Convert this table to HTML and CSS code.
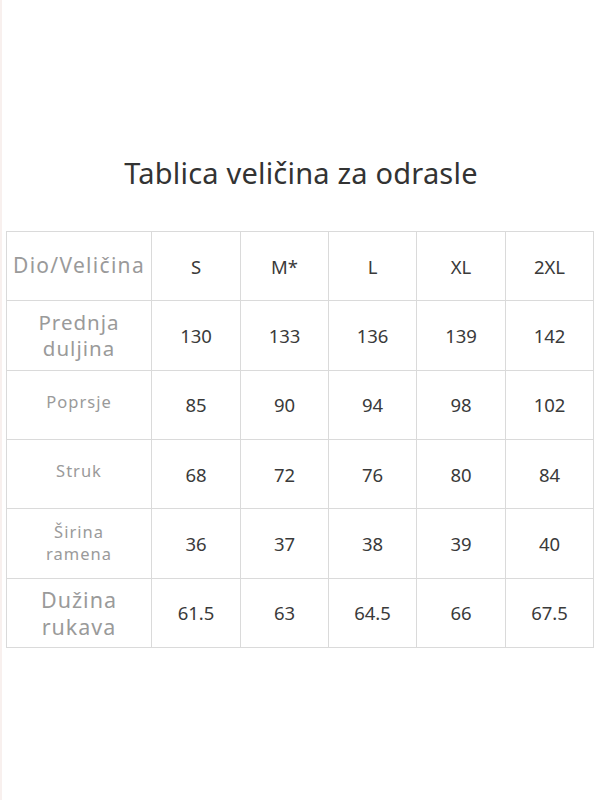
FILE: index.html
```html
<!DOCTYPE html>
<html lang="hr">
<head>
<meta charset="utf-8">
<title>Tablica veličina</title>
<link rel="stylesheet" href="styles.css">
</head>
<body>
<div class="page">
  <h1 class="title">Tablica veličina za odrasle</h1>
  <table class="sizes">
    <colgroup>
      <col class="c-label"><col class="c-s"><col class="c-m"><col class="c-l"><col class="c-xl"><col class="c-2xl">
    </colgroup>
    <tr>
      <th class="label hd">Dio/Veličina</th>
      <th>S</th><th>M*</th><th>L</th><th>XL</th><th>2XL</th>
    </tr>
    <tr>
      <th class="label lg">Prednja<br>duljina</th>
      <td>130</td><td>133</td><td>136</td><td>139</td><td>142</td>
    </tr>
    <tr>
      <th class="label sm up">Poprsje</th>
      <td>85</td><td>90</td><td>94</td><td>98</td><td>102</td>
    </tr>
    <tr>
      <th class="label sm up">Struk</th>
      <td>68</td><td>72</td><td>76</td><td>80</td><td>84</td>
    </tr>
    <tr>
      <th class="label sm">Širina<br>ramena</th>
      <td>36</td><td>37</td><td>38</td><td>39</td><td>40</td>
    </tr>
    <tr>
      <th class="label xl">Dužina<br>rukava</th>
      <td>61.5</td><td>63</td><td>64.5</td><td>66</td><td>67.5</td>
    </tr>
  </table>
</div>
</body>
</html>
```
FILE: styles.css
```css
html, body {
  margin: 0;
  padding: 0;
  background: #ffffff;
}
body {
  font-family: "Noto Sans", "Open Sans", sans-serif;
  color: #333;
}
.page {
  width: 600px;
  height: 800px;
  box-sizing: border-box;
  border-left: 2px solid #f8f0ee;
  padding-top: 153px;
}
.title {
  margin: 0;
  font-weight: 400;
  font-size: 29px;
  line-height: 40px;
  text-align: center;
  color: #333;
  letter-spacing: 0.2px;
}
.sizes {
  margin: 38px 0 0 4px;
  border-collapse: collapse;
  table-layout: fixed;
  width: 588px;
}
.c-label { width: 145px; }
.c-s { width: 89px; }
.c-m { width: 88px; }
.c-l { width: 88px; }
.c-xl { width: 89px; }
.c-2xl { width: 88px; }
.sizes tr { height: 69.33px; }
.sizes th, .sizes td {
  border: 1px solid #dadada;
  padding: 0;
  text-align: center;
  vertical-align: middle;
  font-weight: 400;
  font-size: 18.5px;
  color: #3a3a3a;
}
.sizes th.label {
  color: #9a9a9a;
  letter-spacing: 1px;
}
.sizes th.hd { font-size: 21px; line-height: 26px; letter-spacing: 1.3px; padding-bottom: 2px; }
.sizes th.lg { font-size: 20.5px; line-height: 26px; }
.sizes th.xl { font-size: 21.5px; line-height: 27px; }
.sizes th.sm { font-size: 16.5px; line-height: 22px; }
.sizes th.up { padding-bottom: 6px; }
```
